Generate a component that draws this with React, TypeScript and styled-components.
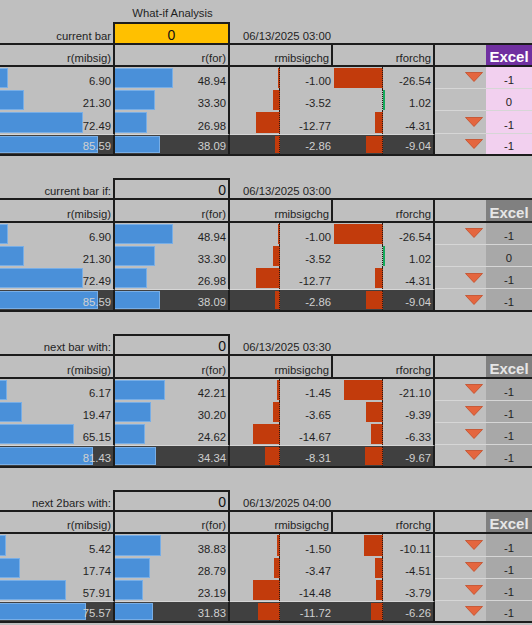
import React from "react"
import styled, { createGlobalStyle, css } from "styled-components"

const ROW = 22.27
const LINE = "2px solid #1c1c1c"

const colors = {
	sheet: "#bfbfbf",
	ink: "#1f1f1f",
	dark: "#404040",
	darkInk: "#d0d0d0",
	blue: "#4a90d9",
	blueEdge: "#78aee6",
	red: "#c23b0c",
	green: "#14a85a",
	gold: "#ffc000",
	purple: "#7030a0",
	pink: "#f2d0ef",
	slate: "#808080",
	slateInk: "#e6e6e6",
	slateCell: "#a8a8a8",
	grid: "#d6d6d6",
	tri: "#e4663f",
	triEdge: "#c44b27",
}

type Row = {
	mib: number
	forr: number
	mibChg: number
	forChg: number
	down: boolean
	excel: number
}

type Section = {
	title?: string
	label: string
	date: string
	accent: boolean
	rows: Row[]
}

const firstRows: Row[] = [
	{ mib: 6.9, forr: 48.94, mibChg: -1.0, forChg: -26.54, down: true, excel: -1 },
	{ mib: 21.3, forr: 33.3, mibChg: -3.52, forChg: 1.02, down: false, excel: 0 },
	{ mib: 72.49, forr: 26.98, mibChg: -12.77, forChg: -4.31, down: true, excel: -1 },
	{ mib: 85.59, forr: 38.09, mibChg: -2.86, forChg: -9.04, down: true, excel: -1 },
]

const sections: Section[] = [
	{
		title: "What-if Analysis",
		label: "current bar",
		date: "06/13/2025 03:00",
		accent: true,
		rows: firstRows,
	},
	{
		label: "current bar if:",
		date: "06/13/2025 03:00",
		accent: false,
		rows: firstRows,
	},
	{
		label: "next bar with:",
		date: "06/13/2025 03:30",
		accent: false,
		rows: [
			{ mib: 6.17, forr: 42.21, mibChg: -1.45, forChg: -21.1, down: true, excel: -1 },
			{ mib: 19.47, forr: 30.2, mibChg: -3.65, forChg: -9.39, down: true, excel: -1 },
			{ mib: 65.15, forr: 24.62, mibChg: -14.67, forChg: -6.33, down: true, excel: -1 },
			{ mib: 81.43, forr: 34.34, mibChg: -8.31, forChg: -9.67, down: true, excel: -1 },
		],
	},
	{
		label: "next 2bars with:",
		date: "06/13/2025 04:00",
		accent: false,
		rows: [
			{ mib: 5.42, forr: 38.83, mibChg: -1.5, forChg: -10.11, down: true, excel: -1 },
			{ mib: 17.74, forr: 28.79, mibChg: -3.47, forChg: -4.51, down: true, excel: -1 },
			{ mib: 57.91, forr: 23.19, mibChg: -14.48, forChg: -3.79, down: true, excel: -1 },
			{ mib: 75.57, forr: 31.83, mibChg: -11.72, forChg: -6.26, down: true, excel: -1 },
		],
	},
]

const AXIS = 50

const mibWidth = (v: number) => v * 1.14
const forWidth = (v: number) => 1 + v * 1.165
const chgWidth = (v: number) => Math.max(1.5, Math.min(AXIS, Math.abs(v) * 1.85))

export default function App() {
	return (
		<>
			<GlobalStyle />
			<Sheet>
				{sections.map((s, i) => (
					<Block key={i} section={s} />
				))}
			</Sheet>
		</>
	)
}

function Block({ section }: { section: Section }) {
	const { title, label, date, accent, rows } = section
	return (
		<Grid>
			{title && <Caption>{title}</Caption>}
			<LabelCell>{label}</LabelCell>
			<InputCell $accent={accent}>0</InputCell>
			<DateCell>{date}</DateCell>
			<InputTail />

			<HeadCell $divider>r(mibsig)</HeadCell>
			<HeadCell $divider>r(for)</HeadCell>
			<HeadCell $divider>rmibsigchg</HeadCell>
			<HeadCell $divider>rforchg</HeadCell>
			<HeadCell />
			<ExcelHead $accent={accent}>Excel</ExcelHead>

			{rows.map((r, i) => {
				const last = i === rows.length - 1
				return (
					<React.Fragment key={i}>
						<BarCell $last={last} $divider>
							<Bar style={{ width: mibWidth(r.mib) }} />
							<Value>{r.mib.toFixed(2)}</Value>
						</BarCell>
						<BarCell $last={last} $divider>
							<Bar style={{ width: forWidth(r.forr) }} />
							<Value>{r.forr.toFixed(2)}</Value>
						</BarCell>
						<ChangeCell $last={last}>
							<ChangeBar value={r.mibChg} />
							<Value>{r.mibChg.toFixed(2)}</Value>
						</ChangeCell>
						<ChangeCell $last={last} $divider>
							<ChangeBar value={r.forChg} />
							<Value>{r.forChg.toFixed(2)}</Value>
						</ChangeCell>
						<TrendCell $last={last}>{r.down && <DownTriangle />}</TrendCell>
						<ExcelCell $last={last} $accent={accent}>
							{r.excel}
						</ExcelCell>
					</React.Fragment>
				)
			})}
		</Grid>
	)
}

function ChangeBar({ value }: { value: number }) {
	const w = chgWidth(value)
	const positive = value > 0
	return (
		<>
			<Fill
				$positive={positive}
				style={{ left: positive ? AXIS : AXIS - w, width: w }}
			/>
			<Axis />
		</>
	)
}

function DownTriangle() {
	return (
		<svg width="18" height="10" viewBox="0 0 18 10">
			<polygon
				points="0.5,0.5 17.5,0.5 9,9.5"
				fill={colors.tri}
				stroke={colors.triEdge}
				strokeWidth="0.8"
				strokeLinejoin="round"
			/>
		</svg>
	)
}

const GlobalStyle = createGlobalStyle`
  html, body {
    margin: 0;
    padding: 0;
    background: ${colors.sheet};
    overflow: hidden;
  }
`

const Sheet = styled.div`
  display: flex;
  flex-direction: column;
  gap: ${ROW}px;
  width: 532px;
  font-family: "Liberation Sans", Arial, sans-serif;
  font-size: 11.3px;
  color: ${colors.ink};
`

const Grid = styled.div`
  display: grid;
  grid-template-columns: 115px 115px 103px 102px 51px 46px;
  grid-auto-rows: ${ROW}px;
`

const cellBase = css`
  box-sizing: border-box;
  display: flex;
  align-items: flex-end;
  justify-content: flex-end;
  padding: 0 2px 2px;
  white-space: nowrap;
  min-width: 0;
`

const Caption = styled.div`
  ${cellBase};
  grid-column: 1 / -1;
  justify-self: start;
  justify-content: center;
  width: 115px;
  margin-left: 115px;
  padding-bottom: 3px;
`

const LabelCell = styled.div`
  ${cellBase};
  padding-bottom: 1px;
  border-right: ${LINE};
  border-bottom: ${LINE};
`

const InputCell = styled.div<{ $accent: boolean }>`
  ${cellBase};
  padding-bottom: 0;
  font-size: 14px;
  color: #111;
  border-top: ${LINE};
  border-right: ${LINE};
  border-bottom: ${LINE};
  background: ${(p) => (p.$accent ? colors.gold : "transparent")};
  justify-content: ${(p) => (p.$accent ? "center" : "flex-end")};
`

const DateCell = styled.div`
  ${cellBase};
  padding-bottom: 1px;
  border-bottom: ${LINE};
`

const InputTail = styled.div`
  grid-column: span 3;
  border-bottom: ${LINE};
`

const HeadCell = styled.div<{ $divider?: boolean }>`
  ${cellBase};
  padding-bottom: 1px;
  border-bottom: ${LINE};
  ${(p) =>
		p.$divider &&
		css`
      border-right: ${LINE};
    `}
`

const ExcelHead = styled.div<{ $accent: boolean }>`
  ${cellBase};
  justify-content: center;
  padding: 0;
  font-size: 15px;
  font-weight: 700;
  border-bottom: ${LINE};
  background: ${(p) => (p.$accent ? colors.purple : colors.slate)};
  color: ${(p) => (p.$accent ? "#ffffff" : colors.slateInk)};
`

const dataCell = css<{ $last?: boolean; $divider?: boolean }>`
  ${cellBase};
  position: relative;
  ${(p) =>
		p.$divider &&
		css`
      border-right: ${LINE};
    `}
  ${(p) =>
		p.$last &&
		css`
      background: ${colors.dark};
      color: ${colors.darkInk};
      border-top: 1px solid ${colors.grid};
      border-bottom: ${LINE};
    `}
`

const BarCell = styled.div<{ $last?: boolean; $divider?: boolean }>`
  ${dataCell};
`

const ChangeCell = styled.div<{ $last?: boolean; $divider?: boolean }>`
  ${dataCell};
`

const Bar = styled.div`
  position: absolute;
  left: 0;
  top: 1px;
  bottom: 1px;
  box-sizing: border-box;
  background: ${colors.blue};
  border: 1px solid ${colors.blueEdge};
  border-left: none;
`

const Fill = styled.div<{ $positive: boolean }>`
  position: absolute;
  top: 1px;
  bottom: 1px;
  background: ${(p) => (p.$positive ? colors.green : colors.red)};
`

const Axis = styled.div`
  position: absolute;
  left: ${AXIS - 1}px;
  top: 0;
  bottom: 0;
  border-left: 1px dotted #2a1a14;
`

const Value = styled.span`
  position: relative;
`

const TrendCell = styled.div<{ $last?: boolean }>`
  box-sizing: border-box;
  display: flex;
  align-items: center;
  justify-content: flex-end;
  padding-right: 3px;
  border-bottom: ${(p) => (p.$last ? LINE : `1px solid ${colors.grid}`)};

  svg {
    display: block;
  }
`

const ExcelCell = styled.div<{ $last?: boolean; $accent: boolean }>`
  ${cellBase};
  justify-content: center;
  background: ${(p) => (p.$accent ? colors.pink : colors.slateCell)};
  border-bottom: ${(p) => (p.$last ? LINE : `1px solid ${colors.grid}`)};
`
